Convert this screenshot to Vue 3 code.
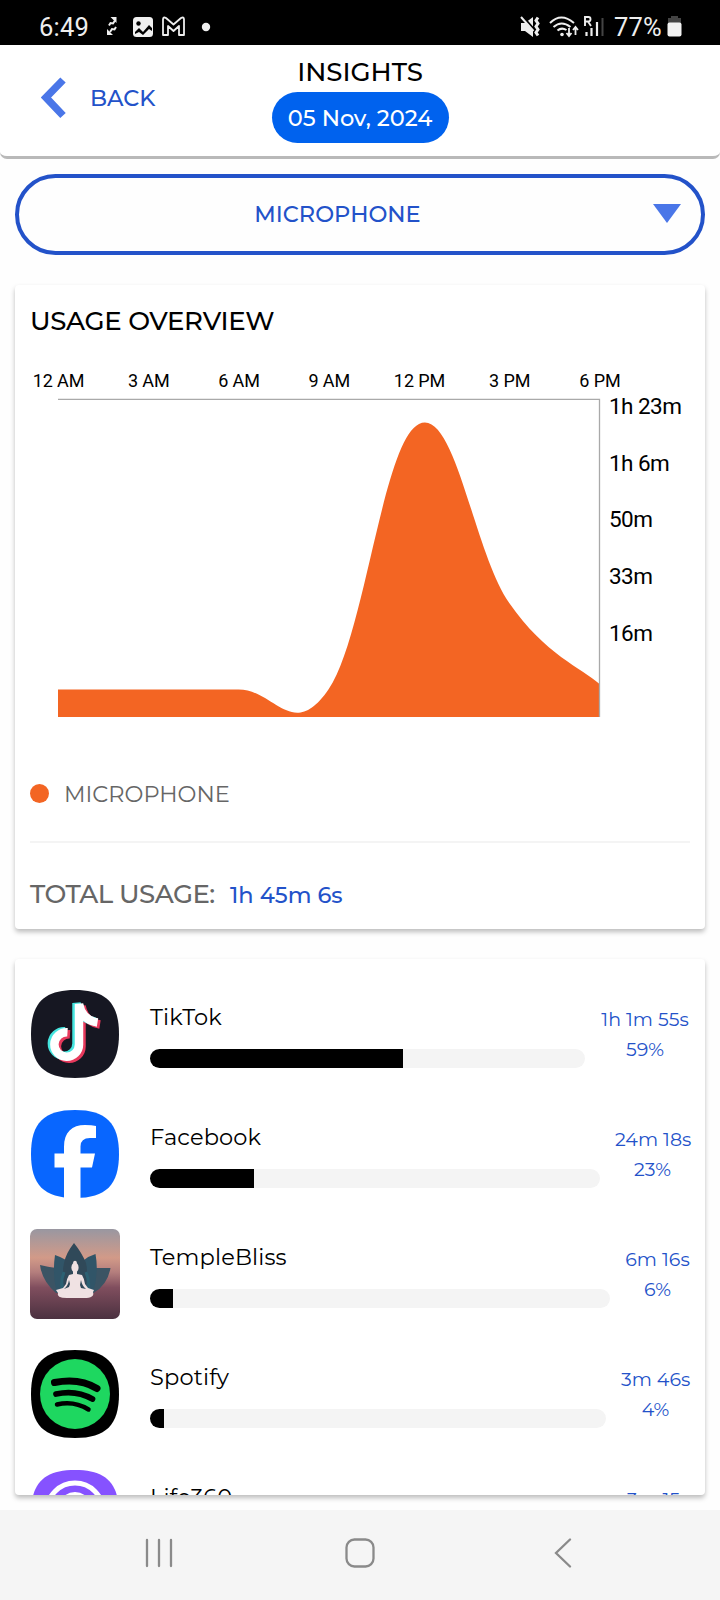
<script setup>
import { computed } from 'vue'

const hours = ['12 AM', '3 AM', '6 AM', '9 AM', '12 PM', '3 PM', '6 PM']
const durations = ['1h 23m', '1h 6m', '50m', '33m', '16m']

// chart samples, in svg units
const samples = [290.5, 290.5, 290.5, 290, 25, 204, 285]
const step = 90.25
const baseY = 318

const areaPath = computed(() => {
  const pts = samples.map((y, i) => [43 + i * step, y])
  const at = (i) => pts[Math.min(Math.max(i, 0), pts.length - 1)]
  let d = `M43 ${baseY}L${pts[0].join(' ')}`
  for (let i = 1; i < pts.length; i++) {
    const [x0, y0] = at(i - 1)
    const [x1, y1] = at(i)
    const ax = x0 + (x1 - at(i - 2)[0]) * 0.2
    const ay = y0 + (y1 - at(i - 2)[1]) * 0.2
    const bx = x1 - (at(i + 1)[0] - x0) * 0.2
    const by = y1 - (at(i + 1)[1] - y0) * 0.2
    d += `C${ax} ${ay} ${bx} ${by} ${x1} ${y1}`
  }
  return `${d}V${baseY}Z`
})

const apps = [
  { id: 'tiktok', name: 'TikTok', time: '1h 1m 55s', percent: 59, fill: 58.2, col: 90 },
  { id: 'facebook', name: 'Facebook', time: '24m 18s', percent: 23, fill: 23.1, col: 75 },
  { id: 'temple', name: 'TempleBliss', time: '6m 16s', percent: 6, fill: 5, col: 65 },
  { id: 'spotify', name: 'Spotify', time: '3m 46s', percent: 4, fill: 3.1, col: 69 },
  { id: 'life', name: 'Life360', time: '3m 15s', percent: 3, fill: 3, col: 64 }
]

const squircle = 'M45 1C76 1 89 14 89 45S76 89 45 89 1 76 1 45 14 1 45 1Z'
const note = 'M37.500 43.200A12.300 12.300 0 1 0 49 55.500V15q3 16 18.500 18.500'
</script>

<template>
  <div class="screen">
    <div class="status-bar">
      <span class="clock">6:49</span>
      <svg class="status-left" width="110" height="24" viewBox="0 0 110 24" fill="none">
        <path d="M4 10.500l1.500-2.500 2.500.5 2-3M11 12l-1.500 2.500-2.500-.5-2 3" stroke="#eee" stroke-width="2" />
        <path d="M5.500 2h6v6zM2 14v6h6z" fill="#eee" />
        <rect x="28" y="2" width="20" height="20" rx="3.500" fill="#f0f0f0" />
        <circle cx="33.500" cy="8.500" r="2.200" fill="#000" />
        <path d="M30 17l4-4 4 4 6-7 3 3v3l-3-2-6 6-4-3-4 2z" fill="#000" />
        <path
          d="M58 4.500q0-3 3-1.500l7.500 6.500L76 3q3-1.500 3 1.500V20h-5v-9l-5.500 5-5.500-5v9h-5z"
          stroke="#eee" stroke-width="1.800" stroke-linejoin="round"
        />
        <circle cx="101" cy="12" r="4.200" fill="#f0f0f0" />
      </svg>
      <svg class="status-right" width="86" height="24" viewBox="0 0 86 24" fill="none">
        <!-- muted / vibrate -->
        <path d="M1 8h4l8-6v20l-8-6H1z" fill="#eee" />
        <path d="M0 -1l15 17" stroke="#000" stroke-width="3" />
        <path d="M1 2l12.500 14" stroke="#eee" stroke-width="2" />
        <path d="M18 2.500l-2 3 2 3-2 3 2 3-2 3 2 3" stroke="#eee" stroke-width="3" />
        <!-- wifi -->
        <g stroke="#eee" stroke-width="2">
          <path d="M30 8q11-11 24 0M33.500 12q8-7 17 0M37.500 15.500q4-3.500 9-.5" />
          <path d="M49 13v8M46.500 18l2.500 3 2.500-3M55.500 20v-8M53 15l2.500-3 2.500 3" stroke-width="1.800" />
        </g>
        <circle cx="42" cy="19.500" r="1.800" fill="#eee" />
        <!-- signal -->
        <path d="M65 11V2h3.500q2 0 2 2.200t-2 2.300H65M68 6.500l3 4.500" stroke="#eee" stroke-width="1.900" />
        <path d="M66.500 17v4M71.500 13v8M77 7v14" stroke="#eee" stroke-width="2.200" />
        <path d="M82.500 3v18" stroke="#444" stroke-width="2" />
      </svg>
      <span class="battery-text">77%</span>
      <svg class="battery" width="15" height="21" viewBox="0 0 15 21">
        <path d="M4 0h7v2h3v5H1V2h3z" fill="#444" />
        <rect x="0.500" y="6.500" width="14" height="14" rx="2" fill="#f2f2f2" />
      </svg>
    </div>

    <header class="header">
      <div class="back">
        <svg width="25" height="42" viewBox="0 0 25 42" fill="none">
          <path d="M22 3L5 20.500 22 38.500" stroke="#4a76e8" stroke-width="7.500" />
        </svg>
        <span>BACK</span>
      </div>
      <div class="heading">
        <h1>INSIGHTS</h1>
        <div class="date-pill">05 Nov, 2024</div>
      </div>
    </header>

    <div class="select">
      <span class="select-label">MICROPHONE</span>
      <svg width="28" height="19" viewBox="0 0 28 19"><path d="M0 0h28L14 19z" fill="#4a76e8" /></svg>
    </div>

    <section class="card overview">
      <h2>USAGE OVERVIEW</h2>
      <svg class="chart" width="690" height="340" viewBox="0 0 690 340">
        <text
          v-for="(hour, i) in hours"
          :key="hour"
          class="hour"
          :x="43.500 + i * step"
          y="-12"
          text-anchor="middle"
        >{{ hour }}</text>
        <path :d="areaPath" fill="#f36523" />
        <path d="M43 .3H584.500V318" fill="none" stroke="#a9a9a9" stroke-width="1.300" />
        <text v-for="(d, i) in durations" :key="d" class="duration" x="594" :y="15 + i * 56.700">{{ d }}</text>
      </svg>
      <div class="legend">
        <span class="legend-dot"></span>
        <span class="legend-label">MICROPHONE</span>
      </div>
      <div class="total">
        <span class="total-label">TOTAL USAGE:</span>
        <span class="total-value">1h 45m 6s</span>
      </div>
    </section>

    <section class="card app-list">
      <div v-for="app in apps" :key="app.id" class="app-row">
        <svg class="app-icon" width="90" height="90" viewBox="0 0 90 90">
          <template v-if="app.id === 'tiktok'">
            <path :d="squircle" fill="#161722" />
            <g fill="none" stroke-width="8.500">
              <path :d="note" stroke="#e7395c" transform="translate(2.500 2)" />
              <path :d="note" stroke="#45e5df" transform="translate(-2.500 -1)" />
              <path :d="note" stroke="#fff" />
            </g>
          </template>
          <template v-else-if="app.id === 'facebook'">
            <path :d="squircle" fill="#0866ff" />
            <path
              d="M34 90V58.500h-9.500v-14H34V38C34 23 42 16 55 16q7 0 11 1v12h-6q-9.500 0-9.500 8.500v7H65l-3 14H50.500V90z"
              fill="#fff"
            />
          </template>
          <template v-else-if="app.id === 'temple'">
            <defs>
              <linearGradient id="dusk" x1="0" y1="0" x2="0" y2="1">
                <stop offset="0" stop-color="#9997a1" />
                <stop offset=".32" stop-color="#d29a88" />
                <stop offset=".48" stop-color="#b47e7d" />
                <stop offset=".65" stop-color="#804e5e" />
                <stop offset="1" stop-color="#4b3140" />
              </linearGradient>
            </defs>
            <rect width="90" height="90" rx="7" fill="url(#dusk)" />
            <path d="M10 36q8 2 16 3l10 10h20l10-10q8 0 14.500 0-3 17-17 25H26Q12 52 10 36z" fill="#3b5464" />
            <path d="M25 26q6 2 11 5l2 33H27Q22 46 25 26zM65.500 25Q59 27 54 31l-2 33h11q6-20 2.500-39z" fill="#315568" />
            <path d="M44 14Q36 24 34 34q-3 14 2 30h18q5-16 2-30Q52 24 44 14z" fill="#304959" />
            <path d="M34 43q-5 14 0 19M56 43q5 14 1 19" fill="none" stroke="#2c6173" stroke-width="3" />
            <ellipse cx="45" cy="38.500" rx="3.600" ry="5" fill="#f0e2e3" />
            <circle cx="45" cy="33.500" r="1.800" fill="#f0e2e3" />
            <path
              d="M43 42h4v3l5 1q2 3 3 9l3 4 6 2-1 2q2 6-9 6H37q-11 0-9-5l-2-3 7-2 3-4q1-6 3-9l4-1zM39 51q-1 6-5 9l5-2 1-3zM51 51l-1 5 1 3 5 1q-4-3-5-9z"
              fill="#f0e2e3" fill-rule="evenodd"
            />
          </template>
          <template v-else-if="app.id === 'spotify'">
            <path :d="squircle" fill="#000" />
            <circle cx="45" cy="45" r="35" fill="#1ed760" />
            <g fill="none" stroke="#000" stroke-linecap="round">
              <path d="M24.500 33.500q25-5 42.500 6" stroke-width="7" />
              <path d="M26 45q20-4.500 36.500 5" stroke-width="5.700" />
              <path d="M27 55.500q17-4 31.500 5" stroke-width="4.500" />
            </g>
          </template>
          <template v-else>
            <path :d="squircle" fill="#8652ff" />
            <g fill="none" stroke="#fff" stroke-width="5">
              <circle cx="45" cy="42" r="28" />
              <circle cx="45" cy="39.500" r="14" />
            </g>
          </template>
        </svg>
        <div class="app-body">
          <div class="app-name">{{ app.name }}</div>
          <div class="track">
            <div class="fill" :style="{ width: app.fill + '%' }"></div>
          </div>
        </div>
        <div class="app-usage" :style="{ width: app.col + 'px' }">
          <div>{{ app.time }}</div>
          <div>{{ app.percent }}%</div>
        </div>
      </div>
    </section>

    <nav class="nav-bar">
      <svg width="28" height="30" viewBox="0 0 28 30" stroke="#8a8a8a" stroke-width="2.300" stroke-linecap="round">
        <path d="M2 2v26M14 2v26M26 2v26" />
      </svg>
      <svg class="nav-home" width="30" height="30" viewBox="0 0 30 30" fill="none" stroke="#8a8a8a" stroke-width="2.300">
        <rect x="1.500" y="1.500" width="27" height="27" rx="8" />
      </svg>
      <svg width="18" height="30" viewBox="0 0 18 30" fill="none" stroke="#8a8a8a" stroke-width="2.300" stroke-linecap="round">
        <path d="M16 1.500L2 15l14 13.500" />
      </svg>
    </nav>
  </div>
</template>

<style>
body {
  margin: 0;
  background: #fff;
}
</style>

<style scoped>
.screen {
  width: 720px;
  height: 1600px;
  display: flex;
  flex-direction: column;
  overflow: hidden;
  background: #fefefe;
  font-family: Montserrat, Inter, "Liberation Sans", sans-serif;
  color: #000;
}

svg {
  display: block;
  flex: none;
}

/* status bar */
.status-bar {
  height: 45px;
  flex: none;
  box-sizing: border-box;
  display: flex;
  align-items: center;
  padding: 8px 38px 0 39px;
  background: #000;
  color: #eee;
  font: 25.5px Roboto, sans-serif;
}

.clock {
  width: 50px;
  letter-spacing: 0.2px;
}

.status-left {
  margin-left: 16px;
}

.status-right {
  margin-left: auto;
}

.battery-text {
  margin-left: 8px;
  width: 49px;
  letter-spacing: 0.2px;
}

.battery {
  margin-left: 4px;
}

/* header */
.header {
  height: 114px;
  flex: none;
  box-sizing: border-box;
  display: grid;
  grid-template-columns: 1fr auto 1fr;
  border-bottom: 3px solid #b9b9b9;
  border-radius: 0 0 7px 7px;
  background: #fff;
}

.back {
  display: flex;
  align-items: center;
  align-self: start;
  margin: 32px 0 0 41px;
  font-size: 22.5px;
  font-weight: 500;
  color: #2352c9;
}

.back span {
  margin-left: 24px;
}

.heading {
  display: flex;
  flex-direction: column;
  align-items: center;
  padding-top: 10px;
}

h1,
h2 {
  margin: 0;
  font-weight: 500;
}

h1 {
  font-size: 26px;
  line-height: 34px;
}

.date-pill {
  width: 177px;
  height: 51px;
  margin-top: 3px;
  border-radius: 26px;
  background: #0062ee;
  color: #fff;
  font-size: 22.5px;
  font-weight: 500;
  line-height: 52px;
  text-align: center;
}

/* dropdown */
.select {
  height: 81px;
  flex: none;
  box-sizing: border-box;
  margin: 15px 15px 0;
  padding: 0 20px 2px 0;
  display: flex;
  align-items: center;
  border: 4px solid #2352c9;
  border-radius: 41px;
}

.select-label {
  flex: 1;
  padding-left: 3px;
  text-align: center;
  font-size: 22.5px;
  font-weight: 500;
  color: #2352c9;
}

/* cards */
.card {
  flex: none;
  box-sizing: border-box;
  margin: 0 15px;
  border-radius: 4px;
  background: #fff;
  box-shadow: 0 3px 5px rgba(0, 0, 0, 0.26);
}

.overview {
  height: 644px;
  margin-top: 30px;
}

.overview h2 {
  padding: 18px 15px 0;
  font-size: 26px;
  line-height: 36px;
  letter-spacing: -0.3px;
}

.chart {
  margin-top: 60px;
  overflow: visible;
}

.hour {
  font: 18px Roboto, sans-serif;
  letter-spacing: -0.1px;
}

.duration {
  font: 22.5px Roboto, sans-serif;
  letter-spacing: -0.55px;
}

.legend {
  display: flex;
  align-items: center;
  height: 80px;
  margin: 13px 15px 0;
  padding-bottom: 9px;
  border-bottom: 2px solid #f4f4f4;
  font-size: 22.5px;
  color: #666;
}

.legend-dot {
  width: 19px;
  height: 19px;
  margin: 2px 15px 0 0;
  border-radius: 50%;
  background: #f36523;
}

.legend-label {
  padding-top: 3px;
}

.total {
  display: flex;
  align-items: baseline;
  margin: 34px 15px 0;
  line-height: 34px;
  font-weight: 500;
}

.total-label {
  width: 200px;
  font-size: 26px;
  letter-spacing: -0.55px;
  color: #666;
}

.total-value {
  font-size: 22.5px;
  color: #2352c9;
}

/* app usage list */
.app-list {
  height: 536px;
  margin-top: 30px;
  padding: 30px 15px 0;
  overflow: hidden;
}

.app-row {
  display: flex;
  height: 120px;
}

.app-body {
  flex: 1;
  margin-left: 30px;
}

.app-name {
  padding-top: 13px;
  font-size: 22.5px;
  line-height: 30px;
  letter-spacing: 0.15px;
}

.track {
  height: 19px;
  margin-top: 17px;
  border-radius: 10px;
  overflow: hidden;
  background: #f4f4f4;
}

.fill {
  height: 100%;
  background: #000;
}

.app-usage {
  margin-left: 15px;
  padding-top: 16px;
  font-size: 19px;
  line-height: 30px;
  text-align: center;
  white-space: nowrap;
  color: #2352c9;
}

/* system navigation */
.nav-bar {
  height: 90px;
  flex: none;
  box-sizing: border-box;
  margin-top: auto;
  padding: 0 148px 4px 145px;
  display: flex;
  align-items: center;
  justify-content: space-between;
  background: #f5f5f5;
}

.nav-home {
  margin-right: 8px;
}
</style>
